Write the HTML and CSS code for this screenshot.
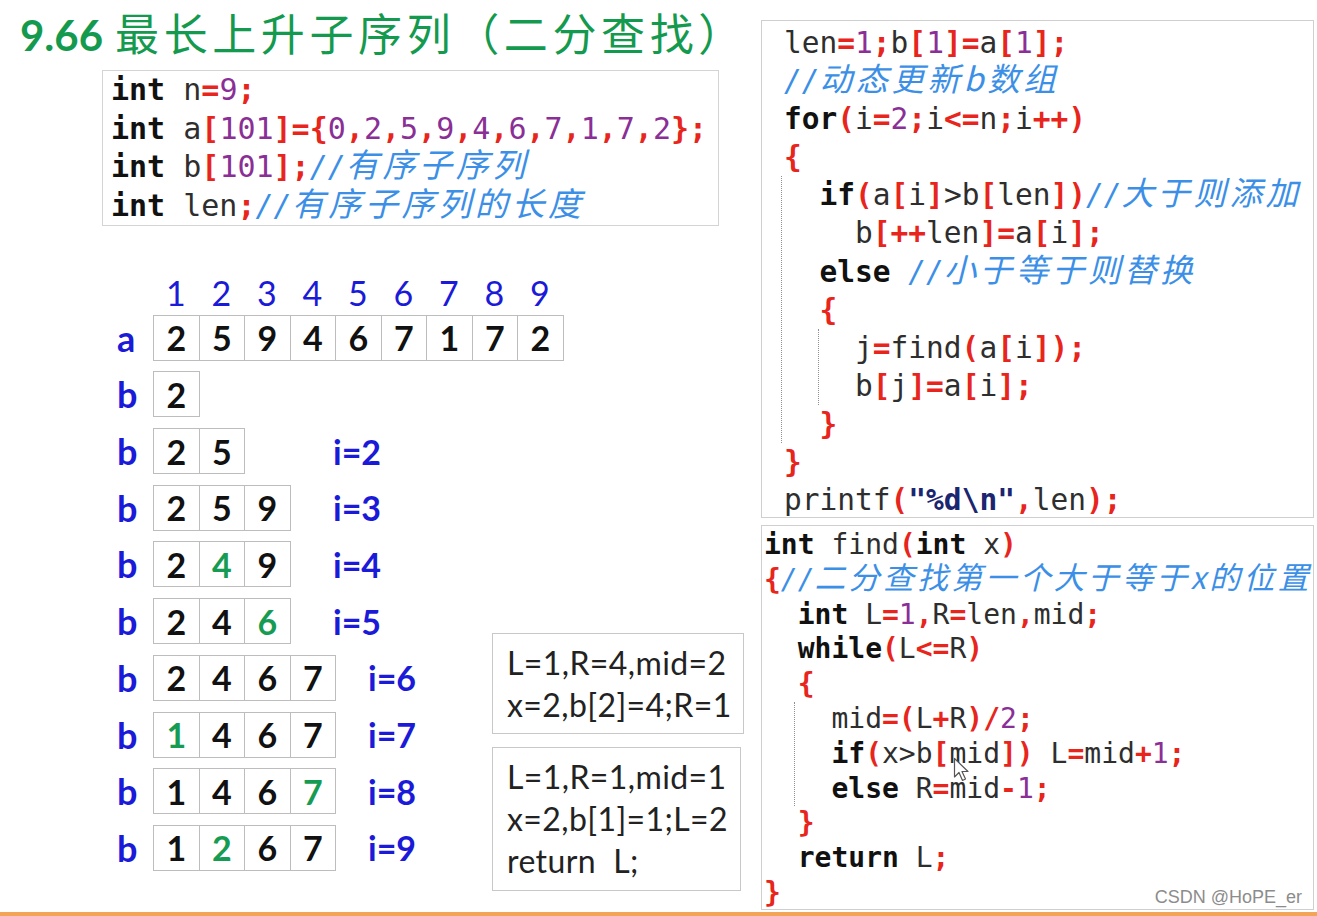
FILE: index.html
```html
<!DOCTYPE html>
<html lang="zh-CN">
<head>
    <meta charset="UTF-8">
    <title>9.66 最长上升子序列（二分查找）</title>
    <link rel="stylesheet" href="styles.css">
</head>
<body>
<div class="slide">
    <div class="stage">
        <div class="left">
            <h1 class="title"><span class="num">9.66</span><span class="zh">最长上升子序列（二分查找）</span></h1>

            <div class="code defs">
<div class="ln"><span class="k">int</span> n<span class="p">=</span><span class="n">9</span><span class="p">;</span></div>
<div class="ln"><span class="k">int</span> a<span class="p">[</span><span class="n">101</span><span class="p">]={</span><span class="n">0</span><span class="p">,</span><span class="n">2</span><span class="p">,</span><span class="n">5</span><span class="p">,</span><span class="n">9</span><span class="p">,</span><span class="n">4</span><span class="p">,</span><span class="n">6</span><span class="p">,</span><span class="n">7</span><span class="p">,</span><span class="n">1</span><span class="p">,</span><span class="n">7</span><span class="p">,</span><span class="n">2</span><span class="p">};</span></div>
<div class="ln"><span class="k">int</span> b<span class="p">[</span><span class="n">101</span><span class="p">];</span><span class="c">//<span class="zh">有序子序列</span></span></div>
<div class="ln"><span class="k">int</span> len<span class="p">;</span><span class="c">//<span class="zh">有序子序列的长度</span></span></div>
            </div>

            <div class="board">
                <div class="heads">
                    <span>1</span><span>2</span><span>3</span><span>4</span><span>5</span><span>6</span><span>7</span><span>8</span><span>9</span>
                </div>
                <div class="row wide">
                    <span class="lab">a</span>
                    <div class="cells">
                        <span class="cell">2</span><span class="cell">5</span><span class="cell">9</span><span class="cell">4</span><span class="cell">6</span><span class="cell">7</span><span class="cell">1</span><span class="cell">7</span><span class="cell">2</span>
                    </div>
                </div>
                <div class="row">
                    <span class="lab">b</span>
                    <div class="cells"><span class="cell">2</span></div>
                </div>
                <div class="row">
                    <span class="lab">b</span>
                    <div class="cells"><span class="cell">2</span><span class="cell">5</span></div>
                    <span class="step">i=2</span>
                </div>
                <div class="row">
                    <span class="lab">b</span>
                    <div class="cells"><span class="cell">2</span><span class="cell">5</span><span class="cell">9</span></div>
                    <span class="step">i=3</span>
                </div>
                <div class="row">
                    <span class="lab">b</span>
                    <div class="cells"><span class="cell">2</span><span class="cell hl">4</span><span class="cell">9</span></div>
                    <span class="step">i=4</span>
                </div>
                <div class="row">
                    <span class="lab">b</span>
                    <div class="cells"><span class="cell">2</span><span class="cell">4</span><span class="cell hl">6</span></div>
                    <span class="step">i=5</span>
                </div>
                <div class="row">
                    <span class="lab">b</span>
                    <div class="cells"><span class="cell">2</span><span class="cell">4</span><span class="cell">6</span><span class="cell">7</span></div>
                    <span class="step far">i=6</span>
                </div>
                <div class="row">
                    <span class="lab">b</span>
                    <div class="cells"><span class="cell hl">1</span><span class="cell">4</span><span class="cell">6</span><span class="cell">7</span></div>
                    <span class="step far">i=7</span>
                </div>
                <div class="row">
                    <span class="lab">b</span>
                    <div class="cells"><span class="cell">1</span><span class="cell">4</span><span class="cell">6</span><span class="cell hl">7</span></div>
                    <span class="step far">i=8</span>
                </div>
                <div class="row">
                    <span class="lab">b</span>
                    <div class="cells"><span class="cell">1</span><span class="cell hl">2</span><span class="cell">6</span><span class="cell">7</span></div>
                    <span class="step far">i=9</span>
                </div>

                <div class="trace">
                    <div class="box box-one">
                        <div>L=1,R=4,mid=2</div>
                        <div>x=2,b[2]=4;R=1</div>
                    </div>
                    <div class="box box-two">
                        <div>L=1,R=1,mid=1</div>
                        <div>x=2,b[1]=1;L=2</div>
                        <div>return&nbsp; L;</div>
                    </div>
                </div>
            </div>
        </div>

        <div class="right">
            <div class="panel code main">
<div class="ln">len<span class="p">=</span><span class="n">1</span><span class="p">;</span>b<span class="p">[</span><span class="n">1</span><span class="p">]=</span>a<span class="p">[</span><span class="n">1</span><span class="p">];</span></div>
<div class="ln"><span class="c">//<span class="zh">动态更新b数组</span></span></div>
<div class="ln"><span class="k">for</span><span class="p">(</span>i<span class="p">=</span><span class="n">2</span><span class="p">;</span>i<span class="p">&lt;=</span>n<span class="p">;</span>i<span class="p">++)</span></div>
<div class="ln"><span class="p">{</span></div>
<div class="guide">
<div class="ln i1"><span class="k">if</span><span class="p">(</span>a<span class="p">[</span>i<span class="p">]</span>&gt;b<span class="p">[</span>len<span class="p">])</span><span class="c">//<span class="zh">大于则添加</span></span></div>
<div class="ln i2">b<span class="p">[++</span>len<span class="p">]=</span>a<span class="p">[</span>i<span class="p">];</span></div>
<div class="ln i1"><span class="k">else</span> <span class="c">//<span class="zh">小于等于则替换</span></span></div>
<div class="ln i1"><span class="p">{</span></div>
<div class="guide inner">
<div class="ln">j<span class="p">=</span>find<span class="p">(</span>a<span class="p">[</span>i<span class="p">]);</span></div>
<div class="ln">b<span class="p">[</span>j<span class="p">]=</span>a<span class="p">[</span>i<span class="p">];</span></div>
</div>
<div class="ln i1"><span class="p">}</span></div>
</div>
<div class="ln"><span class="p">}</span></div>
<div class="ln">printf<span class="p">(</span><span class="s">"%d\n"</span><span class="p">,</span>len<span class="p">);</span></div>
            </div>

            <div class="panel code find">
<div class="ln"><span class="k">int</span> find<span class="p">(</span><span class="k">int</span> x<span class="p">)</span></div>
<div class="ln"><span class="p">{</span><span class="c">//<span class="zh">二分查找第一个大于等于x的位置</span></span></div>
<div class="ln i1"><span class="k">int</span> L<span class="p">=</span><span class="n">1</span><span class="p">,</span>R<span class="p">=</span>len<span class="p">,</span>mid<span class="p">;</span></div>
<div class="ln i1"><span class="k">while</span><span class="p">(</span>L<span class="p">&lt;=</span>R<span class="p">)</span></div>
<div class="ln i1"><span class="p">{</span></div>
<div class="guide g2">
<div class="ln">mid<span class="p">=(</span>L<span class="p">+</span>R<span class="p">)/</span><span class="n">2</span><span class="p">;</span></div>
<div class="ln"><span class="k">if</span><span class="p">(</span>x&gt;b<span class="p">[</span>mid<span class="p">])</span> L<span class="p">=</span>mid<span class="p">+</span><span class="n">1</span><span class="p">;</span></div>
<div class="ln"><span class="k">else</span> R<span class="p">=</span>mid<span class="p">-</span><span class="n">1</span><span class="p">;</span></div>
</div>
<div class="ln i1"><span class="p">}</span></div>
<div class="ln i1"><span class="k">return</span> L<span class="p">;</span></div>
<div class="ln"><span class="p">}</span></div>
            </div>
        </div>
    </div>
    <div class="bottom-bar"></div>

    <svg class="cursor" width="16" height="26" viewBox="0 0 16 26">
        <path d="M1.5 1.5 L1.5 20 L6 15.5 L9.5 23.5 L12.5 22 L9 14.5 L15 14.5 Z" fill="#fff" stroke="#555" stroke-width="1.2" stroke-linejoin="round"/>
    </svg>
    <div class="mark">CSDN @HoPE_er</div>
</div>
</body>
</html>
```

FILE: styles.css
```css
* {
    box-sizing: border-box;
}

body {
    margin: 0;
    background-color: #fff;
    color: #222;
    font-family: Lato, "Noto Sans CJK SC", sans-serif;
}

.slide {
    position: relative;
    width: 1317px;
    height: 916px;
    overflow: hidden;
}

.stage {
    display: flex;
    height: 912px;
}

.left {
    width: 761px;
    flex: none;
}

.right {
    width: 556px;
    flex: none;
    padding-top: 20px;
}

.bottom-bar {
    height: 4px;
    background-color: #f3a457;
}

/* title */
.title {
    margin: 7px 0 0 20px;
    height: 50px;
    line-height: 50px;
    font-size: 44px;
    font-weight: 400;
    color: #149a4e;
    white-space: nowrap;
}

.title .num {
    font-family: Lato, sans-serif;
    font-size: 42px;
    font-weight: 700;
    margin-right: 12px;
}

.title .zh {
    font-family: "Noto Sans CJK SC", sans-serif;
    letter-spacing: 4.6px;
}

/* code */
.code {
    font-family: "DejaVu Sans Mono", "Noto Sans CJK SC", monospace;
    color: #2e2e2e;
}

.code .ln {
    white-space: pre;
}

.k {
    font-weight: 700;
    color: #111;
}

.p {
    font-weight: 700;
    color: #e8251c;
}

.n {
    color: #8a2f96;
}

.s {
    font-weight: 700;
    color: #1b2570;
}

.c {
    font-style: italic;
    color: #3c8fe6;
}

.c .zh {
    font-family: "Noto Sans CJK SC", sans-serif;
    font-size: 1.1em;
    line-height: 0;
    letter-spacing: 0.11em;
}

.defs {
    margin: 13px 0 0 102px;
    width: 617px;
    height: 156px;
    border: 1px solid #d4d4d4;
    padding-left: 8px;
    font-size: 30px;
    line-height: 38.5px;
}

/* array board */
.board {
    display: grid;
    grid-template-columns: 379px 252px;
    grid-template-rows: 31px repeat(10, 46px);
    row-gap: 10.7px;
    margin: 47px 0 0 113px;
}

.heads {
    grid-column: 1 / -1;
    display: flex;
    padding-left: 40px;
    padding-top: 4px;
    font-size: 34px;
    line-height: 31px;
    color: #1a1ad8;
}

.heads span {
    width: 45.5px;
    text-align: center;
}

.row {
    grid-column: 1;
    display: flex;
    align-items: center;
}

.row.wide {
    grid-column: 1 / -1;
}

.lab {
    width: 40px;
    padding-left: 4px;
    font-size: 36px;
    font-weight: 700;
    color: #1a1ad8;
}

.cells {
    display: flex;
    width: 180px;
    flex: none;
}

.row.wide .cells {
    width: auto;
}

.cell {
    width: 46.5px;
    height: 46px;
    flex: none;
    border: 1px solid #bdbdbd;
    display: flex;
    align-items: center;
    justify-content: center;
    font-size: 34px;
    font-weight: 700;
    color: #111;
}

.cell + .cell {
    margin-left: -1px;
}

.cell.hl {
    color: #169c52;
}

.step {
    font-size: 34px;
    font-weight: 700;
    color: #1a1ad8;
}

.step.far {
    margin-left: 35px;
}

.trace {
    grid-column: 2;
    grid-row: 7 / 12;
    padding-top: 34.5px;
    display: flex;
    flex-direction: column;
    align-items: flex-start;
    gap: 13px;
}

.box {
    flex: none;
    border: 1px solid #c8c8c8;
    padding: 8px 0 0 14px;
    font-size: 32px;
    line-height: 42px;
    letter-spacing: 0.4px;
    color: #222;
    white-space: nowrap;
}

.box-one {
    width: 252px;
    height: 101px;
}

.box-two {
    width: 249px;
    height: 144px;
}

/* right panels */
.panel {
    width: 553px;
    border: 1px solid #cfcfcf;
    background-color: #fff;
}

.main {
    height: 498px;
    padding: 3px 0 0 22px;
    font-size: 29.5px;
    line-height: 38.1px;
}

.find {
    margin-top: 7px;
    height: 385px;
    padding: 2px 0 0 2px;
    font-size: 28px;
    line-height: 34.8px;
}

.i1 {
    padding-left: 2ch;
}

.i2 {
    padding-left: 4ch;
}

.guide {
    border-left: 1px dotted #8f8f8f;
    margin-left: -3px;
    padding-left: 2px;
}

.guide.inner {
    margin-left: 34px;
    padding-left: 0;
}

.guide.inner .ln {
    padding-left: calc(4ch - 35px);
}

.guide.g2 {
    margin-left: 30px;
    padding-left: 0;
}

.guide.g2 .ln {
    padding-left: calc(4ch - 31px);
}

.cursor {
    position: absolute;
    left: 953px;
    top: 757px;
}

.mark {
    position: absolute;
    right: 15px;
    bottom: 8px;
    font-family: "Liberation Sans", Arial, sans-serif;
    font-size: 18px;
    line-height: 21px;
    color: #8c8c8c;
}
```
